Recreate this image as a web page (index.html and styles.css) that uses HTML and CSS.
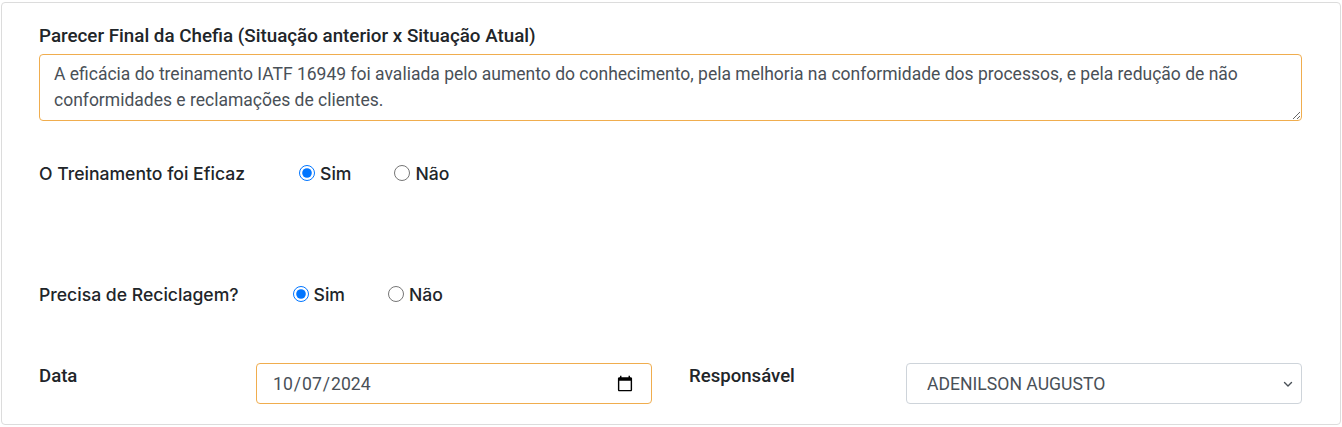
FILE: index.html
```html
<!DOCTYPE html>
<html lang="pt-BR">
<head>
<meta charset="utf-8">
<title>Parecer Final</title>
<link rel="stylesheet" href="styles.css">
</head>
<body>
<div class="card">
  <label class="field-label" for="parecer">Parecer Final da Chefia (Situação anterior x Situação Atual)</label>
  <textarea id="parecer" class="textarea" rows="2">A eficácia do treinamento IATF 16949 foi avaliada pelo aumento do conhecimento, pela melhoria na conformidade dos processos, e pela redução de não conformidades e reclamações de clientes.</textarea>

  <div class="radio-row row-eficaz">
    <span class="radio-label">O Treinamento foi Eficaz</span>
    <label class="radio-opt"><input type="radio" name="eficaz" checked> Sim</label>
    <label class="radio-opt"><input type="radio" name="eficaz"> Não</label>
  </div>

  <div class="radio-row row-recicl">
    <span class="radio-label">Precisa de Reciclagem?</span>
    <label class="radio-opt"><input type="radio" name="recicl" checked> Sim</label>
    <label class="radio-opt"><input type="radio" name="recicl"> Não</label>
  </div>

  <div class="bottom-grid">
    <div class="pair">
      <label class="col-label" for="data">Data</label>
      <input id="data" class="control date" type="date" value="2024-10-07">
    </div>
    <div class="pair">
      <label class="col-label" for="resp">Responsável</label>
      <div class="select-wrap">
        <select id="resp" class="control select">
          <option>ADENILSON AUGUSTO</option>
        </select>
        <svg class="chev" width="10" height="10" viewBox="0 0 10 10"><path d="M1.5 3.5 L5 7 L8.5 3.5" fill="none" stroke="#495057" stroke-width="1.4" stroke-linecap="round" stroke-linejoin="round"/></svg>
      </div>
    </div>
  </div>
</div>
</body>
</html>
```

FILE: styles.css
```css
html, body {
  margin: 0;
  padding: 0;
  background: #ffffff;
}
body {
  font-family: Roboto, "Liberation Sans", sans-serif;
  color: #212529;
}
.card {
  margin: 2px 1px 2px 1px;
  height: 423px;
  box-sizing: border-box;
  border: 1px solid #dcdcdc;
  border-radius: 4px;
  padding: 20px 38px 20px 37px;
  display: flex;
  flex-direction: column;
}
.field-label {
  display: block;
  font-family: Roboto, sans-serif;
  font-weight: 500;
  font-size: 18.8px;
  line-height: 26px;
  color: #212529;
  margin-bottom: 5px;
}
.textarea {
  display: block;
  box-sizing: border-box;
  width: 100%;
  height: 67px;
  border: 1px solid #f0ad4e;
  border-radius: 4px;
  padding: 6px 14px;
  font-family: Roboto, sans-serif;
  font-size: 17.5px;
  line-height: 26px;
  color: #495057;
  resize: vertical;
  outline: none;
  background: #fff;
}
.radio-row {
  display: flex;
  align-items: center;
  height: 26px;
  font-family: "Inter", "Liberation Sans", sans-serif;
  font-weight: 500;
  font-size: 17.6px;
  color: #212529;
}
.row-eficaz { margin-top: 39px; }
.row-recicl { margin-top: 95px; }
.radio-label {
  margin-right: 54px;
}
.radio-opt {
  display: flex;
  align-items: center;
  gap: 5px;
  margin-right: 43px;
}
.radio-opt input {
  width: 16px;
  height: 16px;
  margin: 0;
}
.bottom-grid {
  margin-top: 56px;
  display: grid;
  grid-template-columns: 1fr 1fr;
  column-gap: 37px;
}
.pair {
  display: grid;
  grid-template-columns: 217px 1fr;
}
.col-label {
  font-family: Roboto, sans-serif;
  font-weight: 500;
  font-size: 18.6px;
  line-height: 26px;
  color: #212529;
}
.control {
  box-sizing: border-box;
  width: 100%;
  height: 41px;
  border-radius: 4px;
  font-family: Roboto, sans-serif;
  font-size: 17.6px;
  color: #495057;
  background: #fff;
  outline: none;
}
.date {
  border: 1px solid #f0ad4e;
  padding: 0 15px 0 15px;
}
.select-wrap {
  position: relative;
}
.select {
  appearance: none;
  -webkit-appearance: none;
  border: 1px solid #ced4da;
  padding: 0 32px 0 20px;
}
.chev {
  position: absolute;
  right: 9px;
  top: 16px;
  pointer-events: none;
}
```
